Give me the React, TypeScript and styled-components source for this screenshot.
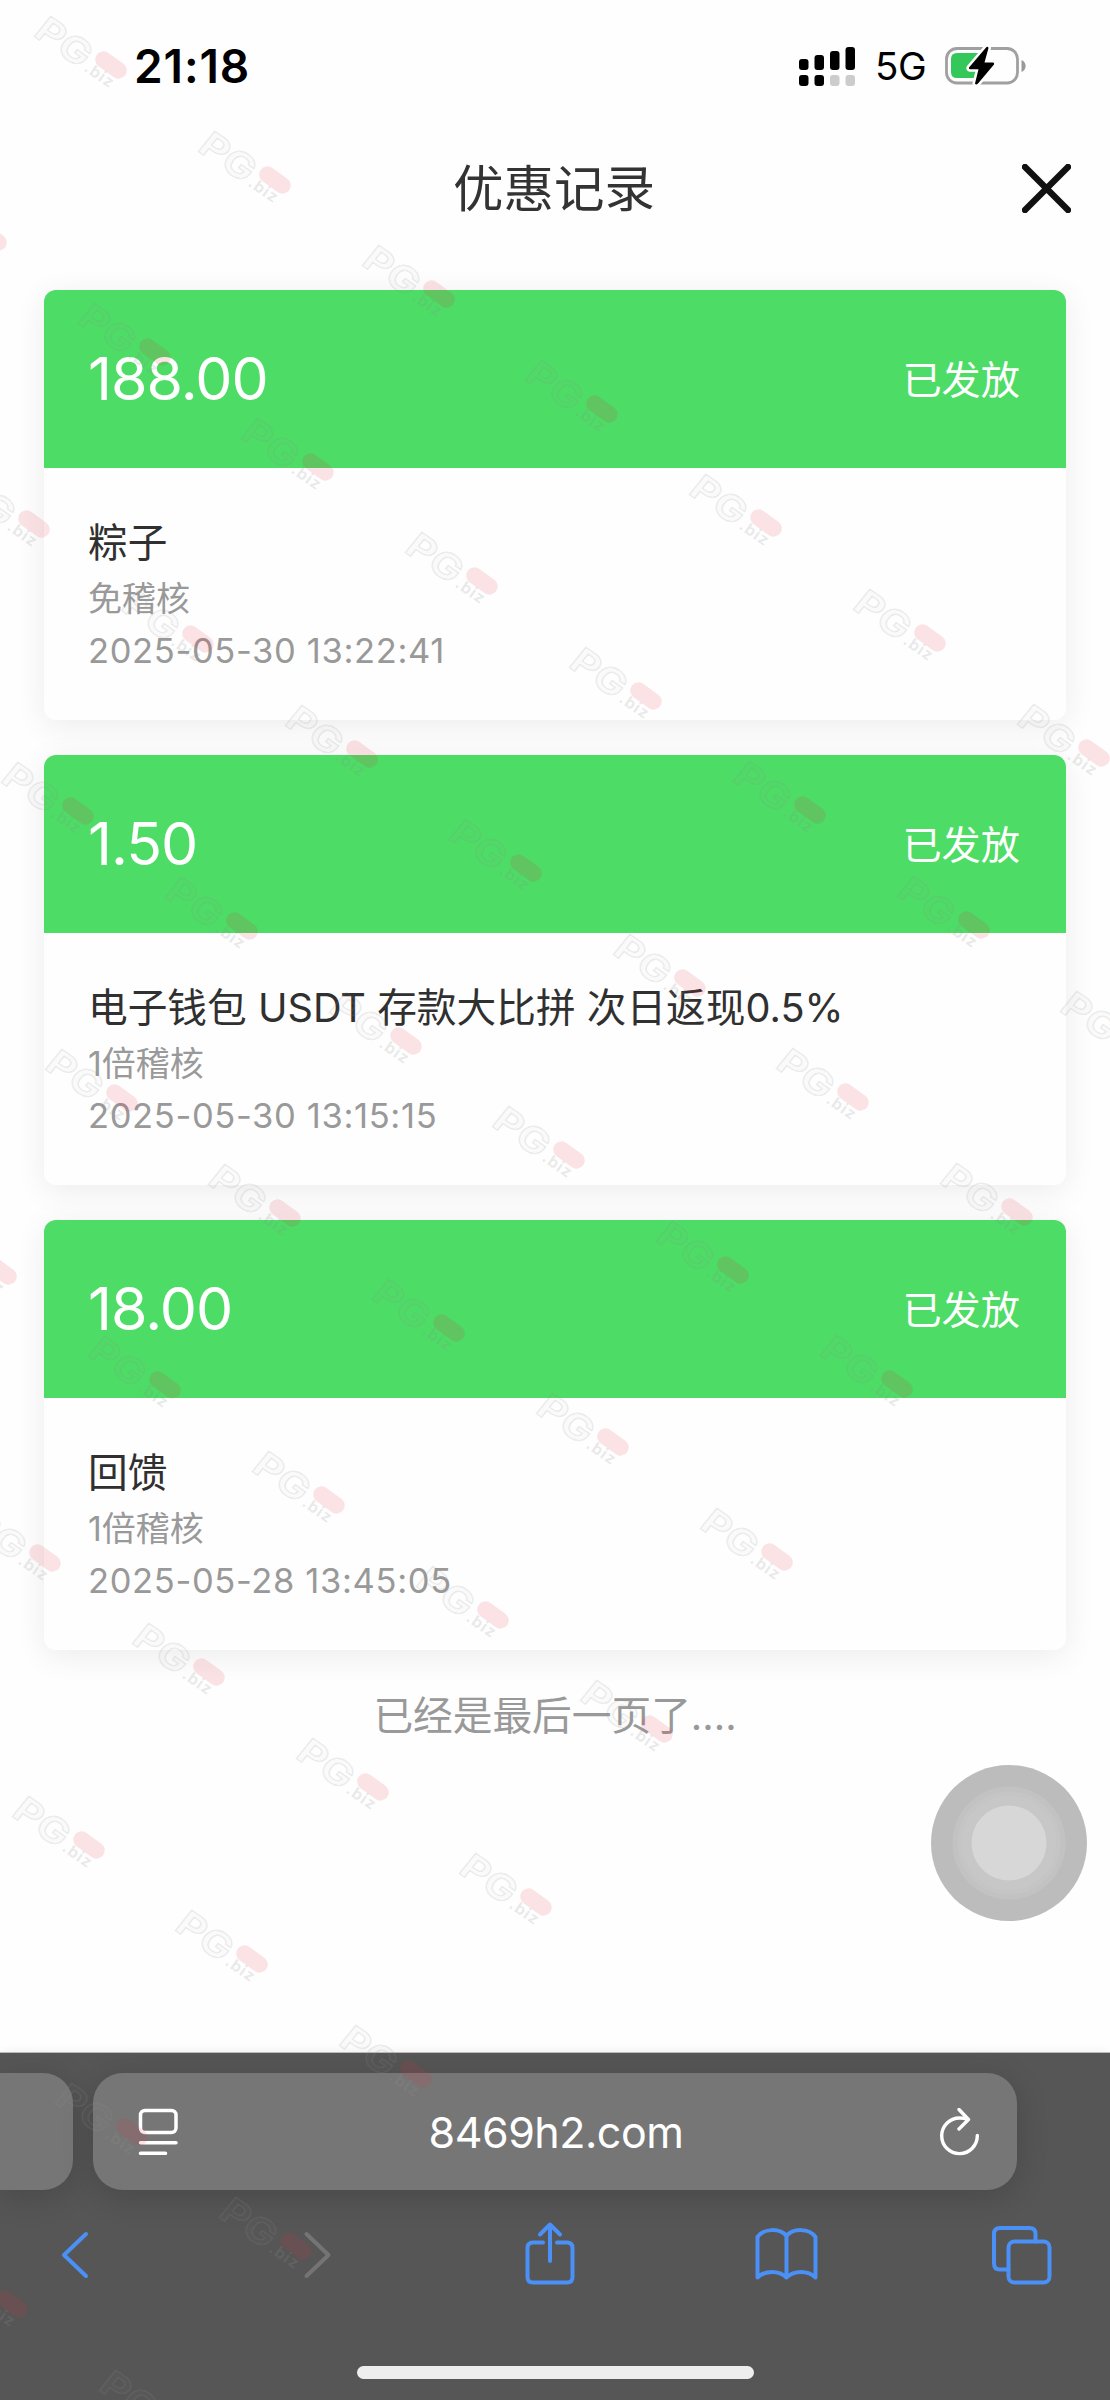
import React from 'react';
import styled, { createGlobalStyle } from 'styled-components';

const GlobalStyle = createGlobalStyle`
  * { box-sizing: border-box; }
  body {
    margin: 0;
    background: #fefefe;
    font-family: Inter, "Noto Sans CJK SC", sans-serif;
  }
`;

const Screen = styled.div`
  position: relative;
  display: flex;
  flex-direction: column;
  width: 1110px;
  height: 2400px;
  overflow: hidden;
  background: #fefefe;
`;

const StatusBar = styled.header`
  display: flex;
  align-items: center;
  justify-content: space-between;
  height: 132px;
  padding: 0 84px 0 134px;
`;

const Clock = styled.span`
  font-size: 46px;
  font-weight: 600;
  line-height: 54px;
  letter-spacing: 0.9px;
  color: #000;
`;

const StatusIcons = styled.div`
  display: flex;
  align-items: center;
`;

const Network = styled.span`
  width: 89px;
  padding-left: 19px;
  font-size: 38.5px;
  line-height: 48px;
  letter-spacing: -0.5px;
  color: #000;
`;

const TitleBar = styled.div`
  display: grid;
  grid-template-columns: 49px 1fr 49px;
  align-items: center;
  height: 112px;
  padding: 0 39px;
`;

const Title = styled.h1`
  grid-column: 2;
  margin: 2px 2px 0 0;
  text-align: center;
  font-size: 50.5px;
  font-weight: 400;
  line-height: 60px;
  color: #333;
`;

const CloseButton = styled.button`
  display: flex;
  padding: 0;
  border: 0;
  background: none;
`;

const Records = styled.main`
  display: flex;
  flex-direction: column;
  gap: 35px;
  padding: 46px 44px 0;
`;

const Card = styled.article`
  height: 430px;
  border-radius: 12px;
  background: #fefefe;
  box-shadow: 0 6px 32px rgba(0, 0, 0, 0.075);
`;

const CardHead = styled.div`
  display: flex;
  align-items: center;
  justify-content: space-between;
  height: 178px;
  padding: 0 46px 0 44px;
  border-radius: 12px 12px 0 0;
  background: #4ddc65;
  color: #fff;
`;

const Amount = styled.span`
  font-size: 59px;
  font-weight: 400;
  line-height: 72px;
  letter-spacing: -1px;
`;

const State = styled.span`
  padding-top: 2px;
  font-size: 39.2px;
  line-height: 56px;
`;

const CardBody = styled.div`
  display: flex;
  flex-direction: column;
  padding: 47px 44px 0;
`;

const Name = styled.div`
  margin-bottom: 2px;
  font-size: 39.7px;
  line-height: 56px;
  color: #303030;
`;

const Detail = styled.div<{ $size: number; $spacing?: number }>`
  font-size: ${(p) => p.$size}px;
  line-height: 51.5px;
  letter-spacing: ${(p) => p.$spacing ?? 0}px;
  color: #999;
`;

const EndNote = styled.p`
  margin: 37px 0 0;
  text-align: center;
  font-size: 39.7px;
  line-height: 58px;
  color: #999;
`;

const AssistiveTouch = styled.div`
  position: absolute;
  top: 1765px;
  right: 23px;
  width: 156px;
  height: 156px;
  border-radius: 50%;
  background: radial-gradient(
    circle,
    #d7d7d7 37px, #c7c7c7 37.8px, #c7c7c7 47px,
    #c5c5c5 47.5px, #c5c5c5 51px, #c2c2c2 52px, #c2c2c2 56px, #bcbcbc 57px
  );
`;

const BrowserBar = styled.footer`
  position: relative;
  display: flex;
  flex-direction: column;
  height: 347px;
  margin-top: auto;
  padding-top: 20px;
  background: #565656;
  box-shadow: 0 -1px 0 #bbb, 0 -2px 10px rgba(0, 0, 0, 0.05);
`;

const Tabs = styled.div`
  display: flex;
  gap: 20px;
  height: 117px;
`;

const PreviousTab = styled.div`
  width: 73px;
  border-radius: 0 30px 30px 0;
  background: #767676;
  box-shadow: 0 6px 32px rgba(0, 0, 0, 0.16);
`;

const AddressField = styled.div`
  display: flex;
  align-items: center;
  justify-content: space-between;
  width: 924px;
  padding: 0 38px 0 45px;
  border-radius: 30px;
  background: #767676;
  box-shadow: 0 6px 32px rgba(0, 0, 0, 0.16);
`;

const Address = styled.span`
  margin-right: 5px;
  font-size: 43px;
  line-height: 52px;
  letter-spacing: -0.5px;
  color: #fff;
`;

const Toolbar = styled.nav`
  display: flex;
  justify-content: space-between;
  padding: 30px 59px 0 45px;
`;

const ToolIcon = styled.svg<{ $muted?: boolean }>`
  width: 60px;
  height: 68px;
  overflow: visible;
  fill: none;
  stroke: ${(p) => (p.$muted ? '#747474' : '#4a90f7')};
  stroke-width: 4;
  stroke-linecap: round;
  stroke-linejoin: round;
`;

const HomeIndicator = styled.div`
  width: 397px;
  height: 13px;
  margin: 78px auto 0;
  border-radius: 7px;
  background: #eee;
`;

const WatermarkLayer = styled.div`
  position: absolute;
  inset: 0;
  overflow: hidden;
  pointer-events: none;
`;

const Mark = styled.svg`
  position: absolute;
  width: 100px;
  height: 84px;
  overflow: visible;
  font-family: Inter, sans-serif;
  font-weight: 700;
`;

const records = [
  { amount: '188.00', name: '粽子', audit: '免稽核', time: '2025-05-30 13:22:41' },
  { amount: '1.50', name: '电子钱包 USDT 存款大比拼 次日返现0.5%', audit: '1倍稽核', time: '2025-05-30 13:15:15' },
  { amount: '18.00', name: '回馈', audit: '1倍稽核', time: '2025-05-28 13:45:05' },
];

// The marks sit on a slanted lattice that is bounded by two of its diagonals.
const marks: { x: number; y: number }[] = [];
for (let b = 0; b <= 12; b++) {
  for (let a = -8; a <= 7 - b; a++) {
    const x = 31 + a * 163.8 + b * 43.6;
    const y = 12 + a * 114.6 + b * 287;
    if (x > -96 && x < 1100 && y > -70 && y < 2390) marks.push({ x, y });
  }
}

const Signal = () => (
  <svg width="58" height="40" viewBox="0 0 58 40">
    <rect x="1" y="13" width="9.5" height="11" rx="3" />
    <rect x="16.5" y="9" width="9.5" height="15" rx="3" />
    <rect x="32" y="5" width="9.5" height="19" rx="3" />
    <rect x="47.5" y="1" width="9.5" height="23" rx="3" />
    <rect x="1" y="29" width="9.5" height="11" rx="3" />
    <rect x="16.5" y="29" width="9.5" height="11" rx="3" />
    <rect x="32" y="29" width="9.5" height="11" rx="3" fill="#ccc" />
    <rect x="47.5" y="29" width="9.5" height="11" rx="3" fill="#ccc" />
  </svg>
);

const Battery = () => (
  <svg width="81" height="40" viewBox="0 0 81 40">
    <rect x="1.5" y="2.5" width="71" height="34.5" rx="10.5" fill="none" stroke="#a0a0a0" strokeWidth="2.8" />
    <path d="M12 7H36V32H12Q6 32 6 26V13Q6 7 12 7Z" fill="#34c759" />
    <path d="M76.5 14C82 16 82 24 76.5 26Z" fill="#999" />
    <path
      d="M41.5 1L24 21.5Q23.5 23 25 23.2H33.5L30 37.5Q31 39.5 33 37.5L49 18.5Q49.6 16.7 48 16.5H39.5L43.5 2Q43 0 41.5 1Z"
      fill="#000"
      stroke="#fefefe"
      strokeWidth="5"
      paintOrder="stroke"
    />
  </svg>
);

const CloseIcon = () => (
  <svg width="49" height="49" viewBox="0 0 49 49" stroke="#111" strokeWidth="6.4" strokeLinecap="round">
    <path d="M3 3L46 46M46 3L3 46" />
  </svg>
);

const ReaderIcon = () => (
  <svg width="40" height="47" viewBox="0 0 40 47" fill="none" stroke="#fff" strokeWidth="3.5" strokeLinecap="round">
    <rect x="2.5" y="2.5" width="35.5" height="22" rx="4.5" />
    <path d="M2.5 34.8H38M2.5 45.3H27.5" />
  </svg>
);

const ReloadIcon = () => (
  <svg width="40" height="48" viewBox="0 0 40 48" fill="none" stroke="#fff" strokeWidth="3.4" strokeLinecap="round" strokeLinejoin="round">
    <path d="M38.3 27.5A17.8 17.8 0 1 1 20.5 10Q25 10 28.5 11.3" />
    <path d="M20 1.5L29.5 11.5L20 21" />
  </svg>
);

const Watermark = () => (
  <WatermarkLayer aria-hidden="true">
    {marks.map((m, i) => (
      <Mark key={i} viewBox="0 0 100 84" style={{ left: m.x, top: m.y }}>
        <g transform="translate(1 23) rotate(35) skewX(-4)">
          <text fontSize="36" textLength="59" lengthAdjust="spacingAndGlyphs" fill="rgba(150,150,150,0.03)" stroke="rgba(145,145,145,0.18)" strokeWidth="1.3">
            PG
          </text>
        </g>
        <rect x="-17.5" y="-8.3" width="35" height="16.6" rx="8.3" fill="rgba(225,45,65,0.135)" transform="translate(80 53) rotate(36)" />
        <text fontSize="16" textLength="32" fill="rgba(145,145,145,0.19)" transform="translate(52 58) rotate(35)">
          .biz
        </text>
      </Mark>
    ))}
  </WatermarkLayer>
);

export default function App() {
  return (
    <>
      <GlobalStyle />
      <Screen>
        <StatusBar>
          <Clock>21:18</Clock>
          <StatusIcons>
            <Signal />
            <Network>5G</Network>
            <Battery />
          </StatusIcons>
        </StatusBar>
        <TitleBar>
          <Title>优惠记录</Title>
          <CloseButton aria-label="关闭">
            <CloseIcon />
          </CloseButton>
        </TitleBar>
        <Records>
          {records.map((r) => (
            <Card key={r.time}>
              <CardHead>
                <Amount>{r.amount}</Amount>
                <State>已发放</State>
              </CardHead>
              <CardBody>
                <Name>{r.name}</Name>
                <Detail $size={34}>{r.audit}</Detail>
                <Detail $size={34.5} $spacing={0.65}>{r.time}</Detail>
              </CardBody>
            </Card>
          ))}
        </Records>
        <EndNote>已经是最后一页了....</EndNote>
        <BrowserBar>
          <Tabs>
            <PreviousTab />
            <AddressField>
              <ReaderIcon />
              <Address>8469h2.com</Address>
              <ReloadIcon />
            </AddressField>
          </Tabs>
          <Toolbar>
            <ToolIcon viewBox="0 0 60 68">
              <path d="M41 14L19 35L41 56" />
            </ToolIcon>
            <ToolIcon viewBox="0 0 60 68" $muted>
              <path d="M24.5 14L46.5 35L24.5 56" />
            </ToolIcon>
            <ToolIcon viewBox="0 0 60 68">
              <path d="M25 22.5H15Q9.5 22.5 9.5 28V57Q9.5 62.5 15 62.5H49Q54.5 62.5 54.5 57V28Q54.5 22.5 49 22.5H39" />
              <path d="M32 41V5M22 14.5L32 4.5L42 14.5" />
            </ToolIcon>
            <ToolIcon viewBox="0 0 60 68">
              <path d="M31.5 16C25 8 9 8 2.5 17V57.5C10 50 24 50 31.5 57.5C39 50 53 50 60.5 57.5V17C54 8 38 8 31.5 16V57.5" />
            </ToolIcon>
            <ToolIcon viewBox="0 0 60 68">
              <rect x="17.5" y="21.5" width="41" height="41" rx="6" />
              <path d="M17.5 49.5H9Q3 49.5 3 43.5V14Q3 8 9 8H38.5Q44.5 8 44.5 14V21.5" />
            </ToolIcon>
          </Toolbar>
          <HomeIndicator />
        </BrowserBar>
        <AssistiveTouch />
        <Watermark />
      </Screen>
    </>
  );
}
